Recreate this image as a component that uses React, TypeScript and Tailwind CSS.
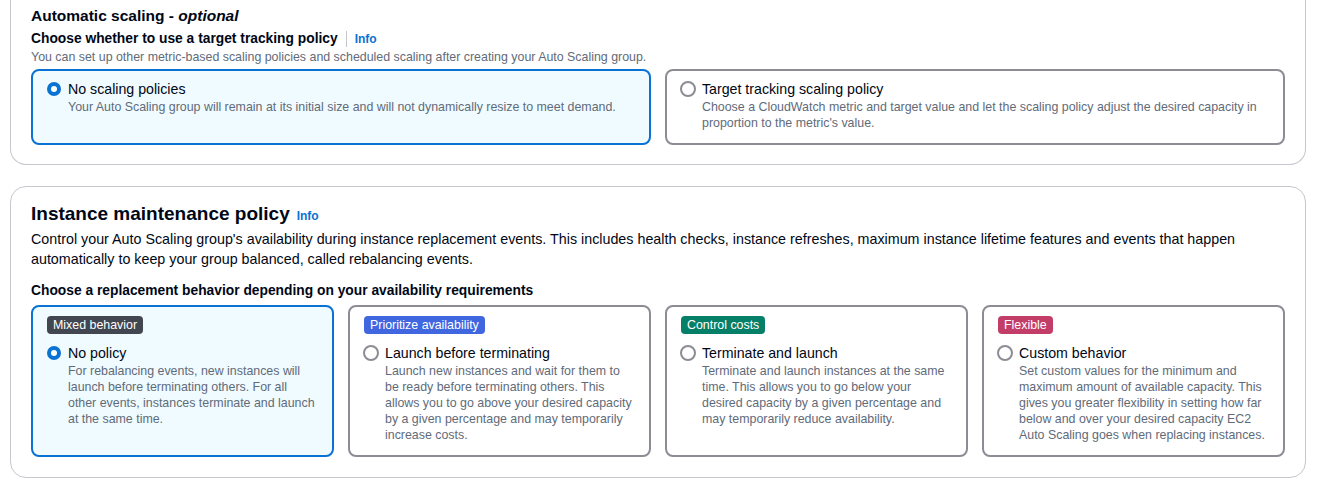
import React from "react";

function Radio({ checked }: { checked: boolean }) {
  return checked ? (
    <span className="mt-[3px] flex h-[14px] w-[14px] shrink-0 items-center justify-center rounded-full bg-[#0972d3]">
      <span className="h-[6px] w-[6px] rounded-full bg-white" />
    </span>
  ) : (
    <span className="ml-[-1px] mr-[-1px] mt-[2px] h-[16px] w-[16px] shrink-0 rounded-full border-2 border-[#8c8c94] bg-white" />
  );
}

function Option({
  checked,
  label,
  desc,
  badge,
  badgeClass,
}: {
  checked: boolean;
  label: string;
  desc: string;
  badge?: string;
  badgeClass?: string;
}) {
  return (
    <div
      className={
        "rounded-lg border-2 px-[14px] pb-[12px] " +
        (badge ? "pt-[9px] " : "pt-[8px] ") +
        (checked ? "border-[#0972d3] bg-[#f0fbff]" : "border-[#8c8c94] bg-white")
      }
    >
      {badge && (
        <div className="mb-[9px] flex">
          <span className={"rounded-[4px] px-[6px] text-[12.4px] leading-[18px] text-white " + badgeClass}>{badge}</span>
        </div>
      )}
      <div className="flex gap-[7px]">
        <Radio checked={checked} />
        <div>
          <div className="text-[14.2px] leading-[20px] text-[#000716]">{label}</div>
          <div className="text-[12.4px] leading-[16px] text-[#5f6b7a]">{desc}</div>
        </div>
      </div>
    </div>
  );
}

export default function App() {
  return (
    <div
      className="min-h-[484px] bg-white px-[10px] text-[#000716]"
      style={{ fontFamily: '"Liberation Sans", Arial, sans-serif' }}
    >
      <div className="w-[1296px] rounded-b-2xl border border-t-0 border-[#c6c6cd] px-[20px] pb-[19px] pt-[6px]">
        <div className="text-[15.5px] font-bold leading-[20px]">
          Automatic scaling - <span className="italic">optional</span>
        </div>
        <div className="mt-[3px] flex items-center">
          <span className="text-[13.8px] font-bold leading-[20px]">Choose whether to use a target tracking policy</span>
          <span className="mx-[8px] h-[16px] w-px bg-[#c6c6cd]" />
          <span className="text-[12px] font-bold text-[#0972d3]">Info</span>
        </div>
        <div className="text-[12.4px] leading-[16px] text-[#5f6b7a]">
          You can set up other metric-based scaling policies and scheduled scaling after creating your Auto Scaling group.
        </div>
        <div className="mt-[4px] grid w-[1254px] grid-cols-2 gap-[14px]">
          <Option
            checked
            label="No scaling policies"
            desc="Your Auto Scaling group will remain at its initial size and will not dynamically resize to meet demand."
          />
          <Option
            checked={false}
            label="Target tracking scaling policy"
            desc="Choose a CloudWatch metric and target value and let the scaling policy adjust the desired capacity in proportion to the metric's value."
          />
        </div>
      </div>

      <div className="mt-[21px] w-[1296px] rounded-2xl border border-[#c6c6cd] px-[20px] pb-[20px] pt-[15px]">
        <div className="flex items-baseline gap-[7px]">
          <span className="text-[19px] font-bold leading-[24px]">Instance maintenance policy</span>
          <span className="text-[12px] font-bold text-[#0972d3]">Info</span>
        </div>
        <div className="mt-[3px] text-[14.3px] leading-[20px] text-[#000716]">
          Control your Auto Scaling group's availability during instance replacement events. This includes health checks, instance refreshes, maximum instance lifetime features and events that happen automatically to keep your group balanced, called rebalancing events.
        </div>
        <div className="mt-[12px] text-[13.8px] font-bold leading-[20px]">
          Choose a replacement behavior depending on your availability requirements
        </div>
        <div className="mt-[4px] grid w-[1254px] grid-cols-4 gap-[14px]">
          <Option
            checked
            badge="Mixed behavior"
            badgeClass="bg-[#414650]"
            label="No policy"
            desc="For rebalancing events, new instances will launch before terminating others. For all other events, instances terminate and launch at the same time."
          />
          <Option
            checked={false}
            badge="Prioritize availability"
            badgeClass="bg-[#4066e0]"
            label="Launch before terminating"
            desc="Launch new instances and wait for them to be ready before terminating others. This allows you to go above your desired capacity by a given percentage and may temporarily increase costs."
          />
          <Option
            checked={false}
            badge="Control costs"
            badgeClass="bg-[#067f68]"
            label="Terminate and launch"
            desc="Terminate and launch instances at the same time. This allows you to go below your desired capacity by a given percentage and may temporarily reduce availability."
          />
          <Option
            checked={false}
            badge="Flexible"
            badgeClass="bg-[#c33d69]"
            label="Custom behavior"
            desc="Set custom values for the minimum and maximum amount of available capacity. This gives you greater flexibility in setting how far below and over your desired capacity EC2 Auto Scaling goes when replacing instances."
          />
        </div>
      </div>
    </div>
  );
}
